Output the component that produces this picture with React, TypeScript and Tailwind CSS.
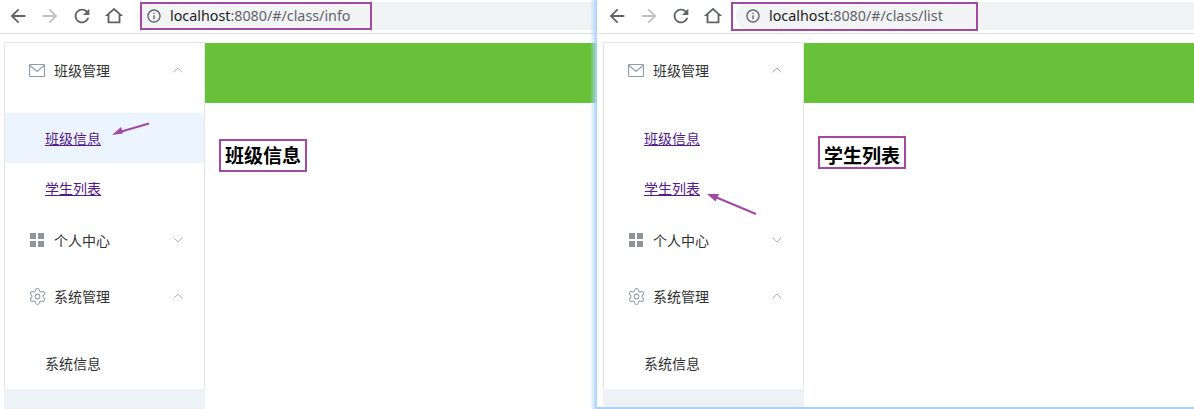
import { ChevronDown, ChevronUp, Settings } from "lucide-react";
import { ReactNode } from "react";

const cjk = { fontFamily: '"Noto Sans CJK SC", "Noto Sans", sans-serif' };

function NavIcon({ d, color = "#5f6368" }: { d: string; color?: string }) {
  return (
    <div className="w-8 flex justify-center">
      <svg width="22" height="22" viewBox="0 0 24 24" fill={color}>
        <path d={d} />
      </svg>
    </div>
  );
}

function Toolbar({ path }: { path: string }) {
  return (
    <div className="h-[34px] border-b border-[#dadce0] flex items-center pl-0.5 pb-px bg-white">
      <NavIcon d="M20 11H7.83l5.59-5.59L12 4l-8 8 8 8 1.41-1.41L7.83 13H20v-2z" />
      <NavIcon color="#bdc1c6" d="M4 11h12.17l-5.59-5.59L12 4l8 8-8 8-1.41-1.41L16.17 13H4v-2z" />
      <NavIcon d="M17.65 6.35C16.2 4.9 14.21 4 12 4c-4.42 0-7.99 3.58-7.99 8s3.57 8 7.99 8c3.73 0 6.84-2.55 7.73-6h-2.08c-.82 2.33-3.04 4-5.65 4-3.31 0-6-2.69-6-6s2.69-6 6-6c1.66 0 3.14.69 4.22 1.78L13 11h7V4l-2.35 2.35z" />
      <NavIcon d="M12 5.69l5 4.5V18H7v-7.81l5-4.5M12 3L2 12h3v8h14v-8h3L12 3z" />
      <div className="ml-[7px] flex-1 h-7 rounded-l-full bg-[#f1f3f4] flex items-center pl-[9px] gap-2 text-[14.3px] font-['Noto_Sans',sans-serif]">
        <svg width="16" height="16" viewBox="0 0 24 24" fill="#5f6368">
          <path d="M11 7h2v2h-2zm0 4h2v6h-2zm1-9C6.48 2 2 6.48 2 12s4.48 10 10 10 10-4.48 10-10S17.52 2 12 2zm0 18c-4.41 0-8-3.59-8-8s3.59-8 8-8 8 3.59 8 8-3.59 8-8 8z" />
        </svg>
        <span className="text-[#5f6368]">
          <span className="text-[#202124]">localhost</span>:8080/#/class/{path}
        </span>
      </div>
    </div>
  );
}

function MenuHead({ icon, label, open }: { icon: ReactNode; label: string; open: boolean }) {
  return (
    <div className="h-14 flex items-center pl-6 pr-[18px] pb-0.5 text-[14px] text-[#303133]">
      <span className="w-4 flex justify-center mr-[9px]">{icon}</span>
      <span className="flex-1">{label}</span>
      {open ? (
        <ChevronUp size={16} strokeWidth={1.1} className="text-[#8f96a3]" />
      ) : (
        <ChevronDown size={16} strokeWidth={1.1} className="text-[#8f96a3]" />
      )}
    </div>
  );
}

function SubItem({ label, link, active }: { label: string; link?: boolean; active?: boolean }) {
  return (
    <div className={`h-[50px] flex items-center pl-10 text-[14px] ${active ? "bg-[#ecf5ff]" : ""}`}>
      {link ? (
        <a href="#" className="text-[#551a8b] underline">
          {label}
        </a>
      ) : (
        <span className="text-[#303133] pb-0.5">{label}</span>
      )}
    </div>
  );
}

function Sidebar({ active }: { active: boolean }) {
  return (
    <div className="w-[201px] flex flex-col shrink-0" style={cjk}>
      <div className="border border-[#e6e6e6] border-b-0 bg-white">
        <MenuHead
          label="班级管理"
          open
          icon={
            <svg width="16" height="13" viewBox="0 0 16 13" fill="none" stroke="#929cae" strokeWidth="1.2">
              <rect x="0.5" y="0.5" width="15" height="12" rx="1" />
              <path d="M1 1.5l7 6 7-6" />
            </svg>
          }
        />
        <div className="pt-3.5">
          <SubItem label="班级信息" link active={active} />
          <SubItem label="学生列表" link />
        </div>
        <MenuHead
          label="个人中心"
          open={false}
          icon={
            <div className="grid grid-cols-2 gap-0.5">
              <div className="w-1.5 h-1.5 bg-[#909399]" />
              <div className="w-1.5 h-1.5 bg-[#909399]" />
              <div className="w-1.5 h-1.5 bg-[#909399]" />
              <div className="w-1.5 h-1.5 bg-[#909399]" />
            </div>
          }
        />
        <MenuHead label="系统管理" open icon={<Settings size={19} strokeWidth={1.3} className="text-[#929cae] shrink-0" />} />
        <div className="pt-3.5">
          <SubItem label="系统信息" />
        </div>
      </div>
      <div className="flex-1 bg-[#eef1f6]" />
    </div>
  );
}

function Panel({ path, title, active, titleClass }: { path: string; title: string; active: boolean; titleClass: string }) {
  return (
    <div className="h-full flex flex-col">
      <Toolbar path={path} />
      <div className="flex-1 flex pt-2 pl-1 min-h-0">
        <Sidebar active={active} />
        <div className="flex-1 pt-px">
          <div className="h-[60px] bg-[#67c23a]" />
          <div
            className={`ml-3.5 inline-block border-2 border-[#a349a4] px-1 h-[33px] text-[19px] font-bold text-black ${titleClass}`}
            style={cjk}
          >
            {title}
          </div>
        </div>
      </div>
    </div>
  );
}

export default function App() {
  return (
    <div className="h-[409px] w-[1194px] flex bg-white overflow-hidden">
      <div className="relative w-[597px] shrink-0">
        <Panel path="info" title="班级信息" active titleClass="mt-9 leading-[27px]" />
        {/* annotations */}
        <div className="absolute left-[140px] top-[2px] w-[232px] h-[28px] border-2 border-[#a349a4]" />
        <svg className="absolute left-[105px] top-[118px]" width="50" height="22" viewBox="0 0 50 22" fill="#a349a4">
          <path d="M44 5.5L13 14.5" stroke="#a349a4" strokeWidth="2" />
          <path d="M7 17l9-8 2 6.5z" />
        </svg>
        {/* window edge glow */}
        <div className="absolute right-0 inset-y-0 w-[7px] bg-gradient-to-r from-transparent to-[#a8d1fb]" />
      </div>
      <div className="relative flex-1 pl-0.5 border-b-2 border-[#a8d1fb]">
        <Panel path="list" title="学生列表" active={false} titleClass="mt-[33px] leading-[33px]" />
        <div className="absolute left-[134px] top-[2px] w-[247px] h-[29px] border-2 border-[#a349a4]" />
        <svg className="absolute left-[104px] top-[188px]" width="60" height="30" viewBox="0 0 60 30" fill="#a349a4">
          <path d="M55 26L12 8" stroke="#a349a4" strokeWidth="2" />
          <path d="M6 6l12 0-3.5 7.5z" />
        </svg>
      </div>
    </div>
  );
}
